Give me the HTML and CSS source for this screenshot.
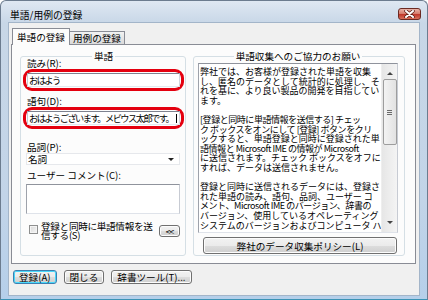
FILE: index.html
```html
<!DOCTYPE html>
<html lang="ja">
<head>
    <meta charset="UTF-8">
    <title>単語/用例の登録</title>
    <link rel="stylesheet" href="styles.css">
</head>
<body>
    <div class="window">
        <div class="titlebar">
            <span class="title">単語/用例の登録</span>
            <span class="close">
                <svg width="11" height="8" viewBox="0 0 11 8">
                    <path d="M2 1 L9 7 M9 1 L2 7" stroke="#5a1a12" stroke-width="3.4" stroke-linecap="round" />
                    <path d="M2 1 L9 7 M9 1 L2 7" stroke="#fff" stroke-width="2" stroke-linecap="round" />
                </svg>
            </span>
        </div>
        <div class="client">
            <div class="tabs">
                <div class="tab active">単語の登録</div>
                <div class="tab">用例の登録</div>
            </div>
            <div class="panel">
                <fieldset class="group word">
                    <legend>単語</legend>
                    <div class="label first">読み(R):</div>
                    <div class="ring"><div class="input">おはよう</div></div>
                    <div class="label">語句(D):</div>
                    <div class="ring"><div class="input">おはようございます。メビウス太郎です。<span class="caret"></span></div></div>
                    <div class="label pos">品詞(P):</div>
                    <div class="select">名詞<span class="arrow"></span></div>
                    <div class="label">ユーザー コメント(C):</div>
                    <div class="textbox"></div>
                    <div class="send-row">
                        <span class="checkbox"></span>
                        <span class="send-text">登録と同時に単語情報を送<br>信する(S)</span>
                        <span class="btn small">&lt;&lt;</span>
                    </div>
                </fieldset>
                <fieldset class="group notice">
                    <legend>単語収集へのご協力のお願い</legend>
                    <div class="memo">
                        <div class="memo-text">弊社では、お客様が登録された単語を収集<br>し、匿名のデータとして統計的に処理し、そ<br>れを基に、より良い製品の開発を目指してい<br>ます。<br><br><span class="tight">[登録と同時に単語情報を送信する] チェッ</span><br><span class="tight">ク ボックスをオンにして [登録] ボタンをクリ</span><br>ックすると、単語登録と同時に登録された単<br><span class="tight">語情報と Microsoft IME の情報が Microsoft</span><br>に送信されます。チェック ボックスをオフに<br>すれば、データは送信されません。<br><br>登録と同時に送信されるデータには、登録さ<br>れた単語の読み、語句、品詞、ユーザー コ<br><span class="tight">メント、Microsoft IME のバージョン、辞書の</span><br>バージョン、使用しているオペレーティング<br>システムのバージョンおよびコンピュータ ハ</div>
                        <div class="scrollbar">
                            <span class="sb-arrow up"></span>
                            <span class="sb-thumb"><span class="grip"></span></span>
                            <span class="sb-arrow down"></span>
                        </div>
                    </div>
                    <div class="btn wide">弊社のデータ収集ポリシー(L)</div>
                </fieldset>
            </div>
            <div class="actions">
                <span class="btn default">登録(A)</span>
                <span class="btn">閉じる</span>
                <span class="btn">辞書ツール(T)...</span>
            </div>
        </div>
    </div>
</body>
</html>
```

FILE: styles.css
```css
* {
    box-sizing: border-box;
}

body {
    margin: 0;
    width: 428px;
    height: 300px;
    overflow: hidden;
    font-family: "Noto Sans CJK JP", "Noto Sans", sans-serif;
    font-size: 9.6px;
    color: #000;
    background: #fff;
}

.window {
    width: 428px;
    height: 300px;
    border: 1px solid #6c7c8f;
    border-bottom-color: #3b93b5;
    border-radius: 6px 6px 0 0;
    padding: 0 7px 3px 7px;
    background: linear-gradient(to bottom, #dfe8f2 0, #c8d7e7 22px, #c2d4e8 200px, #b5cfea 100%);
}

.titlebar {
    height: 21px;
    display: flex;
    justify-content: space-between;
}
.title {
    padding-top: 8px;
    padding-left: 2px;
    line-height: 12px;
    font-size: 9.8px;
}
.close {
    margin-top: 7px;
    margin-right: -1px;
    width: 23px;
    height: 12px;
    border: 1px solid #6b2a22;
    border-radius: 3px;
    background: linear-gradient(to bottom, #e8b3a8 0, #d77f6f 45%, #c0392b 55%, #d7705b 100%);
    display: flex;
    justify-content: center;
    align-items: center;
}

.client {
    height: 274px;
    background: #f0f0f0;
    border: 1px solid #a3b5c9;
    padding-top: 4px;
}

.tabs {
    display: flex;
    align-items: flex-end;
    padding-left: 3px;
    height: 17px;
}
.tab {
    height: 13px;
    padding: 0 3px;
    line-height: 12px;
    border: 1px solid #898c95;
    border-bottom: none;
    border-left: none;
    background: linear-gradient(to bottom, #f2f2f2, #dadada);
}
.tab.active {
    height: 17px;
    padding: 2px 4px 0 4px;
    border-left: 1px solid #898c95;
    background: #fcfcfc;
    position: relative;
    z-index: 1;
    margin-bottom: -1px;
}

.panel {
    margin-left: 2px;
    width: 405px;
    height: 220px;
    border: 1px solid #898c95;
    background: #fcfcfc;
    display: flex;
    gap: 7px;
    padding: 6px 9px 7px 8px;
}

.group {
    margin: 0;
    border: 1px solid #d5dfe5;
    border-radius: 3px;
    min-width: 0;
}
.group legend {
    margin: 0 auto;
    padding: 0 2px;
    line-height: 10px;
}

.word {
    width: 166px;
    padding: 0 5px 0 6px;
}
.notice {
    width: 212px;
    padding: 0 6px 0 4px;
}

.label {
    line-height: 11px;
    margin-top: 5px;
}
.label.first {
    margin-top: -3px;
}
.label.pos {
    margin-top: 13px;
}

.ring {
    margin: 0 -4px;
    border: 3px solid #e4000f;
    border-radius: 9px;
    padding: 1px;
}
.input {
    height: 14px;
    border: 1px solid;
    border-color: #7e8290 #d0d4dc #e3e9ef #c5cad4;
    background: #fff;
    padding-left: 1px;
    line-height: 12px;
    font-size: 9.2px;
    letter-spacing: -1.5px;
    white-space: nowrap;
    overflow: hidden;
}
.caret {
    display: inline-block;
    width: 1px;
    height: 9px;
    margin-left: 3px;
    background: #000;
    vertical-align: -1px;
}

.select {
    margin-left: -1px;
    height: 12px;
    border: 1px solid #e6e8ec;
    background: #fff;
    line-height: 10px;
    padding-left: 1px;
    position: relative;
}
.select .arrow {
    position: absolute;
    right: 5px;
    top: 4px;
    border-left: 3px solid transparent;
    border-right: 3px solid transparent;
    border-top: 3px solid #222;
}

.textbox {
    margin-left: -1px;
    margin-top: 3px;
    height: 30px;
    border: 1px solid;
    border-color: #8f939c #c7cbd3 #dfe3ea #9ea2ab;
    background: #fff;
}

.send-row {
    display: flex;
    align-items: flex-start;
    margin-top: 8px;
    padding-left: 2px;
}
.checkbox {
    flex: none;
    width: 9px;
    height: 9px;
    margin-top: 3px;
    border: 1px solid #8e8f8f;
    background: linear-gradient(135deg, #d8d8d8, #f6f6f6);
    box-shadow: inset 0 0 0 1px #f4f4f4;
}
.send-text {
    margin-left: 3px;
    line-height: 9px;
    width: 116px;
    white-space: nowrap;
    letter-spacing: -0.3px;
}

.btn {
    display: inline-flex;
    justify-content: center;
    align-items: center;
    border: 1px solid #707070;
    border-radius: 3px;
    background: linear-gradient(to bottom, #f2f2f2 0, #ebebeb 50%, #dddddd 51%, #cfcfcf 100%);
    box-shadow: inset 0 0 0 1px #fcfcfc;
    line-height: 10px;
}
.btn.small {
    flex: none;
    width: 21px;
    height: 12px;
    margin-left: 4px;
    margin-top: 3px;
    font-size: 8.5px;
    letter-spacing: -1px;
}
.btn.wide {
    display: flex;
    height: 17px;
    margin: 4px 1px 0 5px;
}

.memo {
    margin-top: 2px;
    height: 170px;
    border: 1px solid;
    border-color: #8f939c #c7cbd3 #dfe3ea #9ea2ab;
    background: #fff;
    display: flex;
    overflow: hidden;
}
.memo-text {
    flex: 1;
    padding: 3px 0 0 1px;
    font-size: 9px;
    line-height: 9.6px;
    white-space: nowrap;
    overflow: hidden;
}
.tight {
    letter-spacing: -0.45px;
}
.scrollbar {
    flex: none;
    width: 16px;
    background: linear-gradient(to right, #e6e6e6, #f4f4f4);
    display: flex;
    flex-direction: column;
    align-items: center;
    border-left: 1px solid #eeeeee;
}
.sb-arrow {
    width: 0;
    height: 0;
    border-left: 3px solid transparent;
    border-right: 3px solid transparent;
}
.sb-arrow.up {
    margin-top: 8px;
    border-bottom: 3px solid #444;
}
.sb-arrow.down {
    margin-top: auto;
    margin-bottom: 8px;
    border-top: 3px solid #444;
}
.sb-thumb {
    margin-top: 4px;
    width: 14px;
    height: 66px;
    border: 1px solid #9d9d9d;
    border-radius: 2px;
    background: linear-gradient(to right, #f3f3f3, #e2e2e2);
    display: flex;
    justify-content: center;
    align-items: center;
}
.grip {
    width: 5px;
    height: 5px;
    border-top: 1px solid #6b6b6b;
    border-bottom: 1px solid #6b6b6b;
    background: linear-gradient(#6b6b6b, #6b6b6b) center / 5px 1px no-repeat;
}

.actions {
    display: flex;
    gap: 7px;
    padding: 6px 0 0 4px;
}
.actions .btn {
    height: 14px;
    padding: 0 5px;
}
.actions .btn.default {
    border-color: #3c7fb1;
    box-shadow: inset 0 0 0 1px #48d8fb;
}
```
